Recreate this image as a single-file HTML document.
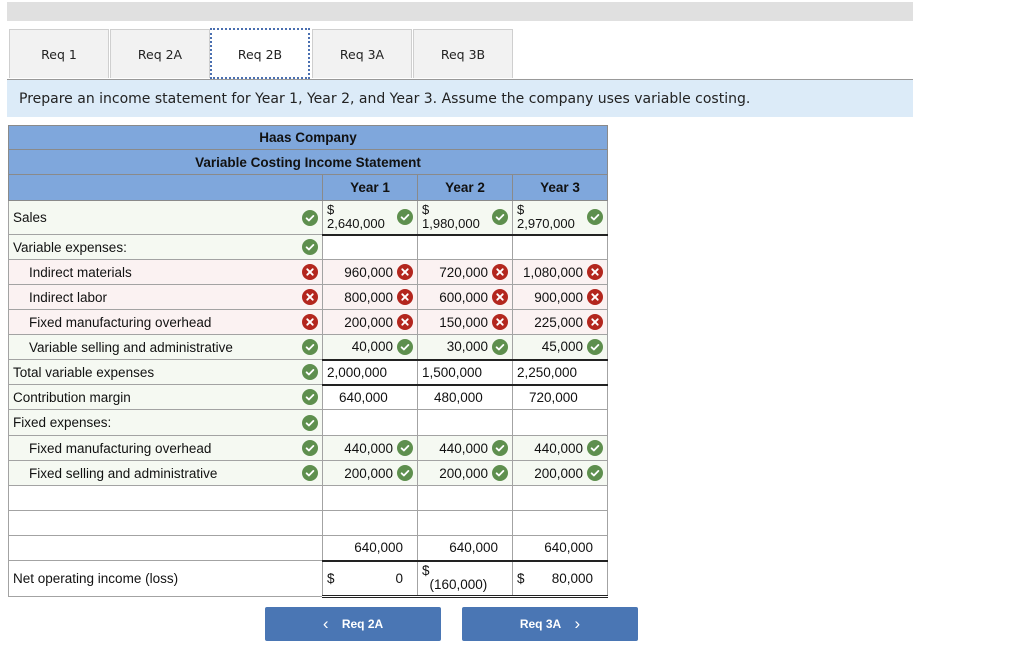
<!DOCTYPE html>
<html><head><style>
body{margin:0;width:1024px;height:657px;background:#fff;font-family:"Liberation Sans",Arial,sans-serif;position:relative;overflow:hidden}
.topbar{position:absolute;left:7px;top:2px;width:906px;height:19px;background:#e0e0e0}
.tab{position:absolute;top:29px;width:100px;height:49px;background:#f2f2f2;border:1px solid #cfcfcf;border-bottom:none;font-family:"DejaVu Sans",sans-serif;font-size:12.5px;color:#222;text-align:center;line-height:50px;box-sizing:border-box}
.tab.act{background:#fff;border:2px dotted #4a6fb0;height:51px;top:28px}
.tabline{position:absolute;left:7px;top:79px;width:906px;height:1px;background:#999}
.instr{position:absolute;left:7px;top:80px;width:906px;height:37px;background:#dcebf8;font-family:"DejaVu Sans",sans-serif;font-size:14px;color:#222;line-height:39px;padding-left:12px;box-sizing:border-box}
table{position:absolute;left:8px;top:125px;border-collapse:collapse;font-size:13.5px;color:#111}
td{border:1px solid #a3a3a3;padding:0;position:relative;white-space:nowrap}
.h td{background:#7fa7dc;font-weight:bold;text-align:center;border-color:#8a8a8a}
.l{width:314px;padding-left:4px;box-sizing:border-box}
.v{box-sizing:border-box;text-align:right;padding-right:24px}
.g{background:#f5f9f2}.r{background:#fbf2f2}
.in{padding-left:20px}
svg.i{position:absolute;top:50%;margin-top:-8px;width:16px;height:16px}
.li{right:4px}.vi{right:4px}
.tk{border-bottom:2px solid #222}
.nb{padding-right:14px}
.btn{position:absolute;top:607px;height:34px;background:#4a76b4;color:#fff;font-weight:bold;font-size:12px;line-height:34px;text-align:center;border-radius:2px}
.btn b{font-size:17px;font-weight:normal;vertical-align:-1px}
</style></head><body>
<div class="topbar"></div>
<div class="tab" style="left:9px">Req 1</div>
<div class="tab" style="left:110px">Req 2A</div>
<div class="tab act" style="left:210px">Req 2B</div>
<div class="tab" style="left:312px">Req 3A</div>
<div class="tab" style="left:413px">Req 3B</div>
<div class="tabline"></div>
<div class="instr">Prepare an income statement for Year 1, Year 2, and Year 3. Assume the company uses variable costing.</div>

<svg width="0" height="0" style="position:absolute"><defs>
<symbol id="ok" viewBox="0 0 16 16"><circle cx="8" cy="8" r="8" fill="#5e8f4e"/><path d="M4.6 8.3l2.3 2.2 4.5-4.6" stroke="#fff" stroke-width="1.8" fill="none" stroke-linecap="round" stroke-linejoin="round"/></symbol>
<symbol id="no" viewBox="0 0 16 16"><circle cx="8" cy="8" r="8" fill="#b3261e"/><path d="M5.3 5.3l5.4 5.4M10.7 5.3l-5.4 5.4" stroke="#fff" stroke-width="1.9" stroke-linecap="round"/></symbol>
</defs></svg>

<table>
<tr class="h" style="height:24px"><td colspan="4">Haas Company</td></tr>
<tr class="h" style="height:25px"><td colspan="4">Variable Costing Income Statement</td></tr>
<tr class="h" style="height:26px"><td class="l"></td><td style="width:94px">Year 1</td><td style="width:94px">Year 2</td><td style="width:94px">Year 3</td></tr>
<tr style="height:34px"><td class="l g">Sales<svg class="i li"><use href="#ok"/></svg></td>
<td class="v g tk" style="text-align:left;padding-left:4px;line-height:14px;font-size:13px">$<br>2,640,000<svg class="i vi"><use href="#ok"/></svg></td>
<td class="v g tk" style="text-align:left;padding-left:4px;line-height:14px;font-size:13px">$<br>1,980,000<svg class="i vi"><use href="#ok"/></svg></td>
<td class="v g tk" style="text-align:left;padding-left:4px;line-height:14px;font-size:13px">$<br>2,970,000<svg class="i vi"><use href="#ok"/></svg></td></tr>
<tr style="height:25px"><td class="l g">Variable expenses:<svg class="i li"><use href="#ok"/></svg></td><td></td><td></td><td></td></tr>
<tr style="height:25px"><td class="l r in">Indirect materials<svg class="i li"><use href="#no"/></svg></td><td class="v r">960,000<svg class="i vi"><use href="#no"/></svg></td><td class="v r">720,000<svg class="i vi"><use href="#no"/></svg></td><td class="v r">1,080,000<svg class="i vi"><use href="#no"/></svg></td></tr>
<tr style="height:25px"><td class="l r in">Indirect labor<svg class="i li"><use href="#no"/></svg></td><td class="v r">800,000<svg class="i vi"><use href="#no"/></svg></td><td class="v r">600,000<svg class="i vi"><use href="#no"/></svg></td><td class="v r">900,000<svg class="i vi"><use href="#no"/></svg></td></tr>
<tr style="height:25px"><td class="l r in">Fixed manufacturing overhead<svg class="i li"><use href="#no"/></svg></td><td class="v r">200,000<svg class="i vi"><use href="#no"/></svg></td><td class="v r">150,000<svg class="i vi"><use href="#no"/></svg></td><td class="v r">225,000<svg class="i vi"><use href="#no"/></svg></td></tr>
<tr style="height:25px"><td class="l g in">Variable selling and administrative<svg class="i li"><use href="#ok"/></svg></td><td class="v g tk">40,000<svg class="i vi"><use href="#ok"/></svg></td><td class="v g tk">30,000<svg class="i vi"><use href="#ok"/></svg></td><td class="v g tk">45,000<svg class="i vi"><use href="#ok"/></svg></td></tr>
<tr style="height:25px"><td class="l g">Total variable expenses<svg class="i li"><use href="#ok"/></svg></td><td class="tk" style="padding-left:4px">2,000,000</td><td class="tk" style="padding-left:4px">1,500,000</td><td class="tk" style="padding-left:4px">2,250,000</td></tr>
<tr style="height:25px"><td class="l g">Contribution margin<svg class="i li"><use href="#ok"/></svg></td><td style="padding-left:16px">640,000</td><td style="padding-left:16px">480,000</td><td style="padding-left:16px">720,000</td></tr>
<tr style="height:26px"><td class="l g">Fixed expenses:<svg class="i li"><use href="#ok"/></svg></td><td></td><td></td><td></td></tr>
<tr style="height:25px"><td class="l g in">Fixed manufacturing overhead<svg class="i li"><use href="#ok"/></svg></td><td class="v g">440,000<svg class="i vi"><use href="#ok"/></svg></td><td class="v g">440,000<svg class="i vi"><use href="#ok"/></svg></td><td class="v g">440,000<svg class="i vi"><use href="#ok"/></svg></td></tr>
<tr style="height:25px"><td class="l g in">Fixed selling and administrative<svg class="i li"><use href="#ok"/></svg></td><td class="v g">200,000<svg class="i vi"><use href="#ok"/></svg></td><td class="v g">200,000<svg class="i vi"><use href="#ok"/></svg></td><td class="v g">200,000<svg class="i vi"><use href="#ok"/></svg></td></tr>
<tr style="height:25px"><td class="l"></td><td></td><td></td><td></td></tr>
<tr style="height:25px"><td class="l"></td><td></td><td></td><td></td></tr>
<tr style="height:25px"><td class="l"></td><td class="v tk nb">640,000</td><td class="v tk nb">640,000</td><td class="v tk nb">640,000</td></tr>
<tr style="height:36px"><td class="l">Net operating income (loss)</td>
<td style="border-bottom:3px double #222;padding:0 14px 0 4px">$<span style="float:right">0</span></td>
<td style="border-bottom:3px double #222;padding-left:4px;line-height:14px">$<br>&nbsp;&nbsp;(160,000)</td>
<td style="border-bottom:3px double #222;padding:0 14px 0 4px">$<span style="float:right">80,000</span></td></tr>
</table>

<div class="btn" style="left:265px;width:176px"><b>&lsaquo;</b>&nbsp;&nbsp;&nbsp;&nbsp;Req 2A</div>
<div class="btn" style="left:462px;width:176px">Req 3A&nbsp;&nbsp;&nbsp;&nbsp;<b>&rsaquo;</b></div>
</body></html>
